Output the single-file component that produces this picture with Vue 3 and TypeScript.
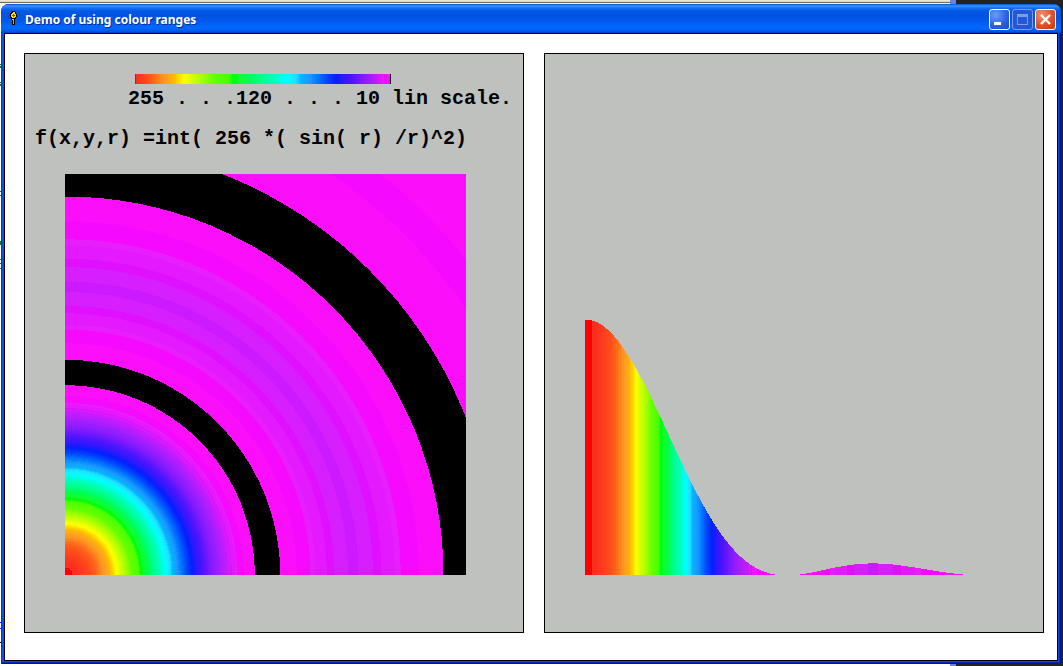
<script setup lang="ts">
type Rgb = [number, number, number]
interface Stop { at: number; rgb: Rgb }
interface Band { start: number; end: number; color: string }

const PLOT_SIZE = 401
const PEAK = 255
const SCALE = 64

// Hue stops, indexed by distance from the top value of the range.
const stops: Stop[] = [
  { at: 1, rgb: [251, 47, 31] },
  { at: 10, rgb: [255, 74, 26] },
  { at: 18, rgb: [255, 100, 26] },
  { at: 26, rgb: [255, 145, 30] },
  { at: 33, rgb: [255, 165, 30] },
  { at: 38, rgb: [255, 184, 0] },
  { at: 47, rgb: [255, 250, 0] },
  { at: 51, rgb: [245, 255, 0] },
  { at: 60, rgb: [192, 255, 0] },
  { at: 70, rgb: [145, 255, 0] },
  { at: 78, rgb: [100, 255, 0] },
  { at: 94, rgb: [72, 255, 0] },
  { at: 96, rgb: [0, 255, 16] },
  { at: 101, rgb: [0, 255, 16] },
  { at: 103, rgb: [16, 255, 45] },
  { at: 115, rgb: [0, 255, 85] },
  { at: 124, rgb: [0, 255, 135] },
  { at: 138, rgb: [0, 255, 185] },
  { at: 147, rgb: [0, 255, 240] },
  { at: 152, rgb: [0, 255, 255] },
  { at: 160, rgb: [40, 220, 255] },
  { at: 165, rgb: [0, 184, 255] },
  { at: 174, rgb: [30, 150, 255] },
  { at: 180, rgb: [0, 128, 255] },
  { at: 192, rgb: [0, 65, 255] },
  { at: 200, rgb: [0, 32, 255] },
  { at: 206, rgb: [40, 25, 255] },
  { at: 216, rgb: [75, 20, 255] },
  { at: 226, rgb: [130, 26, 255] },
  { at: 236, rgb: [165, 30, 255] },
  { at: 243, rgb: [205, 25, 255] },
  { at: 244, rgb: [215, 30, 255] },
  { at: 245, rgb: [225, 15, 255] },
  { at: 246, rgb: [228, 25, 255] },
  { at: 247, rgb: [228, 25, 255] },
  { at: 248, rgb: [233, 30, 255] },
  { at: 249, rgb: [245, 10, 255] },
  { at: 251, rgb: [245, 10, 255] },
  { at: 252, rgb: [251, 14, 250] },
  { at: 254, rgb: [251, 14, 250] },
]

function colorOf(value: number): string {
  if (value <= 0) return 'rgb(0, 0, 0)'
  if (value >= PEAK) return 'rgb(255, 0, 0)'
  const raw = PEAK - value
  const k = raw < 236 ? raw - (raw % 2 === 0 ? 1 : 0) : raw
  const i = Math.max(1, stops.findIndex((s) => s.at >= k))
  const a = stops[i - 1]
  const b = stops[i]
  const t = (k - a.at) / (b.at - a.at)
  const mix = a.rgb.map((c, n) => Math.round(c + (b.rgb[n] - c) * t))
  return `rgb(${mix.join(', ')})`
}

function intensity(radius: number): number {
  if (radius === 0) return PEAK
  const r = radius / SCALE
  return Math.min(PEAK, Math.floor(256 * (Math.sin(r) / r) ** 2))
}

function bands(count: number, step: number, color: (x: number) => string): Band[] {
  const out: Band[] = []
  for (let i = 0; i < count; i++) {
    const x = i * step
    const c = color(x)
    const last = out[out.length - 1]
    if (last && last.color === c) last.end = x + step
    else out.push({ start: x, end: x + step, color: c })
  }
  return out
}

const legend = bands(256, 1, (x) => colorOf(PEAK - x))
const rings = bands(2300, 0.25, (x) => colorOf(intensity(x))).reverse()
const columns = Array.from({ length: PLOT_SIZE }, (_, x) => {
  const height = intensity(x)
  return { x, height, color: colorOf(height) }
}).filter((c) => c.height > 0)
</script>

<template>
  <div class="desktop">
    <main class="window">
      <header class="titlebar">
        <svg class="torch" width="8" height="16" viewBox="0 0 8 16" shape-rendering="crispEdges" aria-hidden="true">
          <path d="M3 0h3v1h1v2h1v3h-1v2h-1v6h-3v-5h-1v-2h-1v-5h1v-1h1z" fill="#000" />
          <path d="M4 1h2v2h1v3h-1v1h-3v-1h-1v-3h1v-1h1z" fill="#ffe600" />
          <path d="M4 3h1v1h1v1h-1v1h-1v-1h-1v-1h1z" fill="#f01818" />
          <path d="M3 8h2v1h-2z" fill="#d8d8d8" />
          <path d="M4 9h1v4h-1z" fill="#e0a000" />
        </svg>
        <h1 class="title">Demo of using colour ranges</h1>
        <div class="controls">
          <button class="control" type="button" aria-label="Minimize">
            <svg width="19" height="19" viewBox="0 0 19 19" shape-rendering="crispEdges"><path d="M4 12h7v3h-7z" fill="#fff" /></svg>
          </button>
          <button class="control dim" type="button" aria-label="Maximize" disabled>
            <svg width="19" height="19" viewBox="0 0 19 19" shape-rendering="crispEdges"><path d="M4 4h11v11h-11zM5 7v7h9v-7z" fill="#7d9bf0" fill-rule="evenodd" /></svg>
          </button>
          <button class="control close" type="button" aria-label="Close">
            <svg width="19" height="19" viewBox="0 0 19 19"><path d="M5 5l9 9M14 5l-9 9" stroke="#fff" stroke-width="2.4" /></svg>
          </button>
        </div>
      </header>

      <div class="client">
        <section class="panel">
          <svg class="legend" width="256" height="10" viewBox="0 0 256 10" shape-rendering="crispEdges" role="img" aria-label="Colour scale from 255 to 0">
            <rect v-for="b in legend" :key="b.start" :x="b.start" y="0" :width="b.end - b.start" height="10" :fill="b.color" />
          </svg>
          <p class="line scale">255 . . .120 . . . 10 lin scale.</p>
          <p class="line formula">f(x,y,r) =int( 256 *( sin( r) /r)^2)</p>
          <svg class="rings" width="401" height="401" viewBox="0 0 401 401" shape-rendering="crispEdges" role="img" aria-label="Radial intensity map">
            <circle v-for="b in rings" :key="b.start" cx="0.5" cy="400.5" :r="b.end" :fill="b.color" />
          </svg>
        </section>

        <section class="panel profile">
          <svg width="401" height="255" viewBox="0 0 401 255" shape-rendering="crispEdges" role="img" aria-label="Intensity profile">
            <rect v-for="c in columns" :key="c.x" :x="c.x" :y="255 - c.height" width="1" :height="c.height" :fill="c.color" />
          </svg>
        </section>
      </div>
    </main>
  </div>
</template>

<style>
body {
  margin: 0;
}
</style>

<style scoped>
.desktop {
  box-sizing: border-box;
  display: flex;
  min-height: 100vh;
  padding: 4px 2px 2px 1px;
  background:
    linear-gradient(#fff 0 60px, #0a7a20 60px 61px, #fff 61px 62px, #0a7a20 62px 64px, #fff 64px 78px, #0a7a20 78px 79px, #fff 79px 80px, #0a7a20 80px 82px, #fff 82px 187px, #0a7a20 187px 188px, #fff 188px 191px, #0a7a20 191px 192px, #fff 192px 237px, #0a7a20 237px 241px, #fff 241px 255px, #0a7a20 255px 256px, #fff 256px 259px, #0a7a20 259px 260px, #fff 260px 264px, #0a7a20 264px 265px, #fff 265px 618px, #1010ff 618px 619px, #fff 619px 624px, #1010ff 624px 625px, #fff 625px 638px, #000 638px 639px, #fff 639px) 0 4px / 1px 100% no-repeat,
    linear-gradient(#ece9d8 0 1px, #d8d4c2 1px 2px, #77735f 2px 3px, #f2f0e4 3px) 0 0 / 89.4% 4px no-repeat,
    linear-gradient(to right, #fff 0 89.4%, #6b82e0 89.4% 89.9%, #23241f 89.9%);
}

.window {
  display: flex;
  flex: 1;
  flex-direction: column;
  padding: 0 3px 3px;
  border-radius: 8px 8px 0 0;
  overflow: hidden;
  background: #0a50e6;
  box-shadow: inset 1px 0 #0a36d0, inset -1px -1px #00138c, inset -2px -2px #0226bc;
}

.titlebar {
  display: flex;
  flex: none;
  align-items: center;
  height: 29px;
  margin: 0 -3px;
  padding: 0 5px 0 8px;
  background: linear-gradient(#0a50d8 0, #3a93ff 2px, #1570f5 4px, #0458e6 7px, #0053e1 12px, #0058ee 17px, #0066ff 22px, #0066ff 25px, #005be8 27px, #0040c4 29px);
}

.torch {
  flex: none;
}

.title {
  flex: 1;
  margin: 2px 0 0 8px;
  color: #fff;
  font: 700 12px/16px "Trebuchet MS", "Noto Sans", sans-serif;
  text-shadow: 1px 1px #0a2a8c;
  white-space: nowrap;
}

.controls {
  display: flex;
  gap: 2px;
  padding-top: 2px;
}

.control {
  width: 21px;
  height: 21px;
  padding: 0;
  border: 1px solid #fff;
  border-radius: 3px;
  background: radial-gradient(circle at 30% 25%, #6f9cf5, #2c63e4 55%, #1347cf);
}

.control svg {
  display: block;
}

.control.dim {
  border-color: #7d9bf0;
  background: #2257d8;
}

.control.close {
  background: radial-gradient(circle at 30% 25%, #f0916f, #e2502c 55%, #c9380f);
}

.client {
  display: grid;
  grid-template-columns: 1fr 1fr;
  flex: 1;
  gap: 20px;
  padding: 19px 13px 27px 19px;
  border: 1px solid #000;
  background: #fff;
}

.panel {
  display: flex;
  flex-direction: column;
  align-items: flex-start;
  min-width: 0;
  padding-top: 20px;
  border: 1px solid #000;
  background: #bfc1be;
}

.legend {
  margin: 0 0 5px 110px;
}

.line {
  margin: 0;
  color: #000;
  font: 700 20px/20px "Liberation Mono", "Courier New", monospace;
  white-space: pre;
}

.scale {
  margin: 0 0 20px 103px;
}

.formula {
  margin: 0 0 25px 10px;
}

.rings {
  margin: 0 0 57px 40px;
}

.profile {
  justify-content: flex-end;
  padding: 20px 40px 57px;
}
</style>
